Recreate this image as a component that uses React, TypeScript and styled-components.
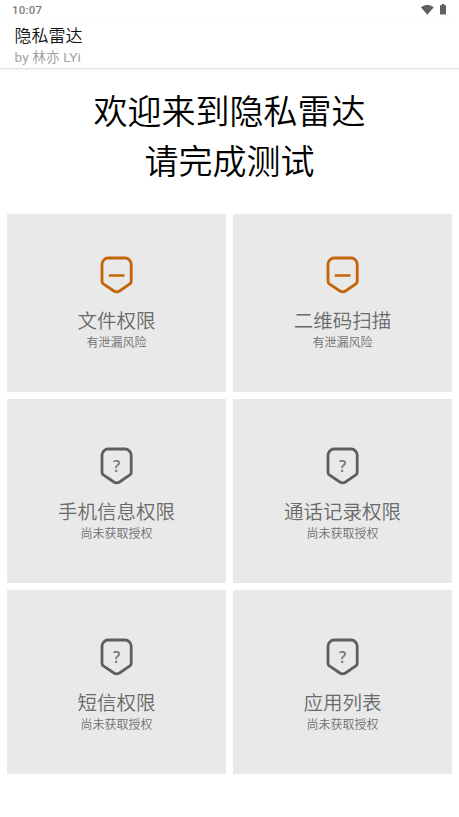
import React from "react";
import styled, { createGlobalStyle } from "styled-components";

const GlobalStyle = createGlobalStyle`
  * { box-sizing: border-box; }
  body { margin: 0; background: #fff; }
`;

const Screen = styled.main`
  display: flex;
  flex-direction: column;
  width: 459px;
  height: 817px;
  background: #fff;
  overflow: hidden;
  font-family: Roboto, "Noto Sans CJK SC", sans-serif;
`;

const StatusBar = styled.div`
  display: flex;
  justify-content: space-between;
  height: 20px;
  padding: 0 12px;
  font-size: 11.5px;
  font-weight: 500;
  line-height: 21px;
  letter-spacing: 0.2px;
  color: #7c7c7c;
`;

const StatusIcons = styled.svg`
  width: 27px;
  height: 12px;
  margin-top: 4px;
`;

const Header = styled.header`
  height: 49px;
  padding: 4px 14.5px 0;
  border-bottom: 1px solid #e0e0e0;
  box-shadow: 0 1px 3px rgba(0, 0, 0, 0.05);
`;

const AppName = styled.div`
  font-size: 17px;
  font-weight: 350;
  line-height: 25px;
  color: #111;
`;

const Author = styled.div`
  font-size: 13.7px;
  line-height: 17px;
  letter-spacing: 0.1px;
  color: #a2a2a2;
`;

const Welcome = styled.h1`
  height: 144.5px;
  margin: 0;
  padding-top: 18px;
  font-size: 34px;
  font-weight: 350;
  line-height: 50px;
  text-align: center;
  color: #000;
`;

const Grid = styled.section`
  display: grid;
  grid-template-columns: 219px 219px;
  grid-template-rows: 178.5px 184px 183.5px;
  gap: 7px;
  padding: 0 7px;
`;

const Card = styled.article`
  display: flex;
  flex-direction: column;
  align-items: center;
  justify-content: flex-end;
  padding-bottom: 41px;
  background: #e9e9e9;
`;

const Shield = styled.svg<{ $risk: boolean }>`
  width: 33px;
  height: 38px;
  margin-right: 1px;
  color: ${(p) => (p.$risk ? "#c46408" : "#5e5e5e")};
`;

const Mark = styled.text`
  font-family: "Open Sans", sans-serif;
  font-size: 16px;
  font-weight: 600;
  text-anchor: middle;
  fill: #777;
`;

const CardTitle = styled.div`
  margin-top: 15px;
  font-size: 19.5px;
  font-weight: 350;
  line-height: 26px;
  color: #6a6a6a;
`;

const CardStatus = styled.div`
  font-size: 12px;
  font-weight: 350;
  line-height: 16px;
  color: #707070;
`;

const permissions = [
  { name: "文件权限", risk: true },
  { name: "二维码扫描", risk: true },
  { name: "手机信息权限", risk: false },
  { name: "通话记录权限", risk: false },
  { name: "短信权限", risk: false },
  { name: "应用列表", risk: false },
];

function ShieldIcon({ risk }: { risk: boolean }) {
  return (
    <Shield viewBox="0 0 33 38" $risk={risk} fill="none" stroke="currentColor">
      <path
        d="M8 2H25.200Q27.500 2 29.400 3.900Q31.200 5.700 31.200 8V25.500Q31.200 27 29.500 28.200L19.500 35Q16.700 36.600 13.900 35L3.700 28.200Q2 27 2 25.500V8Q2 5.700 3.800 3.900Q5.700 2 8 2Z"
        strokeWidth="2.8"
        strokeLinejoin="round"
      />
      {risk ? (
        <path d="M8.700 19.500H24.500" strokeWidth="2.500" />
      ) : (
        <Mark x="16.700" y="24.500" stroke="none">?</Mark>
      )}
    </Shield>
  );
}

export default function App() {
  return (
    <>
      <GlobalStyle />
      <Screen>
        <StatusBar>
          <span>10:07</span>
          <StatusIcons viewBox="0 0 27 12" fill="#606060">
            <path d="M.8 3.300Q7.300-1.800 13.800 3.300L7.300 10.700Z" />
            <path d="M20 1.200H21.700V0H24.300V1.200H26V10.500H20Z" />
          </StatusIcons>
        </StatusBar>
        <Header>
          <AppName>隐私雷达</AppName>
          <Author>by 林亦 LYi</Author>
        </Header>
        <Welcome>
          欢迎来到隐私雷达
          <br />
          请完成测试
        </Welcome>
        <Grid>
          {permissions.map(({ name, risk }) => (
            <Card key={name}>
              <ShieldIcon risk={risk} />
              <CardTitle>{name}</CardTitle>
              <CardStatus>{risk ? "有泄漏风险" : "尚未获取授权"}</CardStatus>
            </Card>
          ))}
        </Grid>
      </Screen>
    </>
  );
}
